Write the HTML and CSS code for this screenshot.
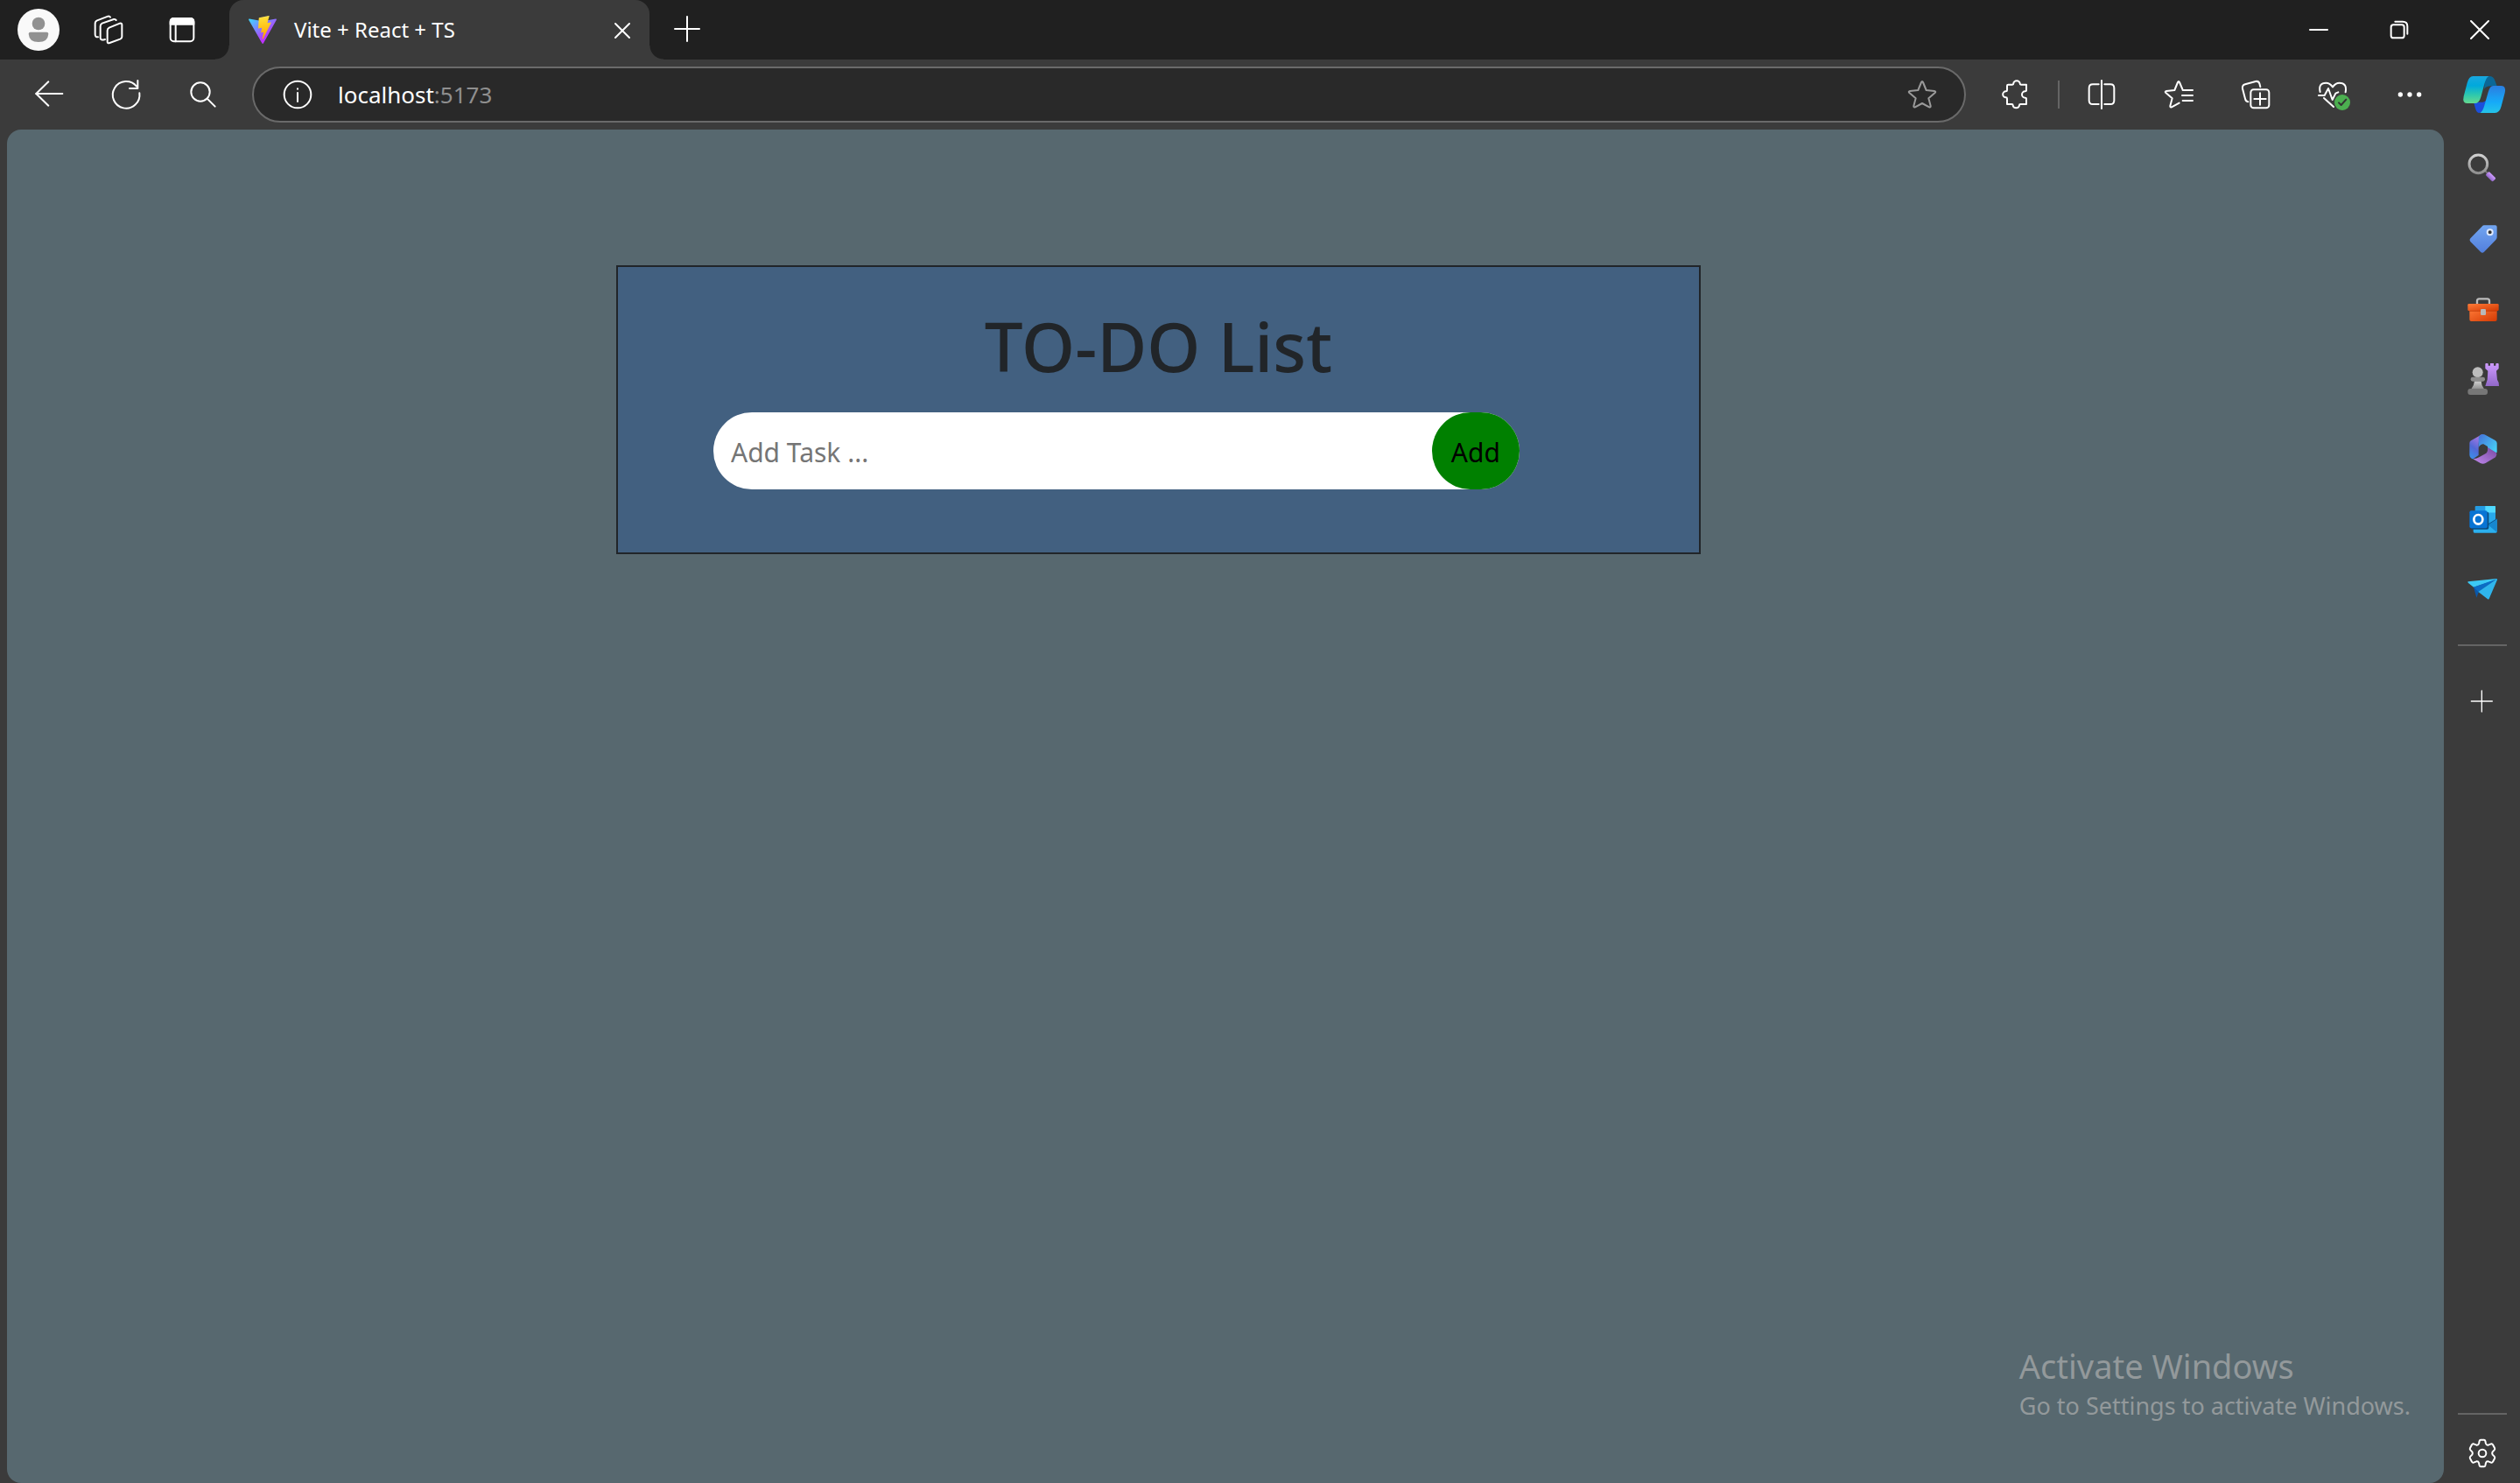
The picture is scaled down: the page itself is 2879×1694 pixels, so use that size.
FILE: index.html
```html
<!DOCTYPE html>
<html lang="en">
<head>
<meta charset="utf-8">
<title>Vite + React + TS</title>
<link rel="stylesheet" href="styles.css">
</head>
<body>
<header class="titlebar">
  <button class="profile" aria-label="Profile">
    <svg class="avatar" viewBox="0 0 144 144"><circle cx="72" cy="72" r="72" fill="#f9f9f9"/><circle cx="72" cy="51" r="22" fill="#919191"/><path d="M44 80H100Q106 80 106 86Q104 114 72 114Q40 114 38 86Q38 80 44 80Z" fill="#919191"/></svg>
  </button>
  <button class="workspaces" aria-label="Workspaces">
    <svg class="icon" viewBox="0 0 96 96"><path d="M44 51Q44 44 50 41L87 26Q94 24 94 31V72Q94 77 88 80L52 93Q44 96 44 89Z M36 81Q20 86 20 76V36Q20 29 26 26L66 12Q72 11 74 15 M12 73Q2 74 2 64V27Q2 19 9 16L46 2Q52 1 54 5"/></svg>
  </button>
  <button class="vertical-tabs" aria-label="Tab actions">
    <svg class="icon" viewBox="0 0 96 96"><rect x="8" y="9" width="80" height="79" rx="12"/><path d="M8 29V20Q8 9 20 9H76Q88 9 88 20V29Z" fill="#fff"/><path d="M26 29V88"/></svg>
  </button>
  <div class="tab">
    <svg class="favicon" viewBox="0 0 256 257"><defs><linearGradient id="v1" x1="-1%" x2="58%" y1="8%" y2="78%"><stop offset="0" stop-color="#41d1ff"/><stop offset="1" stop-color="#bd34fe"/></linearGradient><linearGradient id="v2" x1="43%" x2="50%" y1="2%" y2="89%"><stop offset="0" stop-color="#ffea83"/><stop offset=".08" stop-color="#ffdd35"/><stop offset="1" stop-color="#ffa800"/></linearGradient></defs><path fill="url(#v1)" d="M255.153 37.938L134.897 252.976c-2.483 4.44-8.862 4.466-11.382.048L.875 37.958c-2.746-4.814 1.371-10.646 6.827-9.67l120.385 21.517a6.537 6.537 0 0 0 2.322-.004l117.867-21.483c5.438-.991 9.574 4.796 6.877 9.62Z"/><path fill="url(#v2)" d="M185.432.063L96.44 17.501a3.268 3.268 0 0 0-2.634 3.014l-5.474 92.456a3.268 3.268 0 0 0 3.997 3.378l24.777-5.718c2.318-.535 4.413 1.507 3.936 3.838l-7.361 36.047c-.495 2.426 1.782 4.5 4.151 3.78l15.304-4.649c2.372-.72 4.652 1.36 4.15 3.788l-11.698 56.621c-.732 3.542 3.979 5.473 5.943 2.437l1.313-2.028l72.516-144.72c1.215-2.423-.88-5.186-3.54-4.672l-25.505 4.922c-2.396.462-4.435-1.77-3.759-4.114l16.646-57.705c.677-2.35-1.37-4.583-3.769-4.113Z"/></svg>
    <span class="tab-title">Vite + React + TS</span>
    <button class="tab-close" aria-label="Close tab"><svg class="icon" viewBox="0 0 96 96"><path d="M24 27L72 75M72 27L24 75"/></svg></button>
  </div>
  <button class="new-tab" aria-label="New tab"><svg class="icon" viewBox="0 0 96 96"><path d="M6 45H90M48 3V87"/></svg></button>
  <div class="window-controls">
    <button aria-label="Minimize"><svg class="icon" viewBox="0 0 96 96"><path d="M18 48H78"/></svg></button>
    <button aria-label="Restore"><svg class="icon" viewBox="0 0 96 96"><rect x="20" y="31" width="45" height="45" rx="8"/><path d="M34 20H60Q76 20 76 36V62"/></svg></button>
    <button aria-label="Close"><svg class="icon" viewBox="0 0 96 96"><path d="M18 18L78 78M78 18L18 78"/></svg></button>
  </div>
</header>

<nav class="toolbar">
  <button class="tool" aria-label="Back"><svg class="icon" viewBox="0 0 96 96"><path d="M94 45H3M46 4L4 45L46 86"/></svg></button>
  <button class="tool" aria-label="Refresh"><svg class="icon" viewBox="0 0 96 96"><path d="M94 43A46 46 0 1 1 84 20M88 0V27H60"/></svg></button>
  <button class="tool" aria-label="Search"><svg class="icon" viewBox="0 0 96 96"><circle cx="39" cy="39" r="32"/><path d="M62 62L89 89"/></svg></button>
  <div class="address">
    <svg class="icon" viewBox="0 0 96 96"><circle cx="48" cy="48" r="46"/><path d="M48 42V72M48 28V29"/></svg>
    <span class="url">localhost<span class="port">:5173</span></span>
    <button class="bookmark" aria-label="Add to favorites"><svg class="icon dim" viewBox="0 0 96 96"><path d="M45 6Q48 0 51 6L62 33L90 36Q97 38 91 43L70 61L77 87Q78 93 72 91L48 78L24 91Q18 93 19 87L26 61L5 43Q-1 38 6 36L34 33Z"/></svg></button>
  </div>
  <button class="tool" aria-label="Extensions"><svg class="icon" viewBox="0 0 96 96"><path d="M22 14H36Q40 14 40 10A11 9 0 0 1 62 10Q62 14 66 14H84V34Q84 37 80 37A11 11 0 0 0 80 59Q84 59 84 62V81H64Q60 81 60 85A11 9 0 0 1 38 85Q38 81 34 81H18V62Q18 58 14 58A10 10 0 0 1 14 37Q18 37 18 33V18Q18 14 22 14Z"/></svg></button>
  <span class="tool-divider"></span>
  <button class="tool" aria-label="Split screen"><svg class="icon" viewBox="0 0 96 96"><path d="M38 13H18Q5 13 5 26V68Q5 81 18 81H38M58 13H78Q91 13 91 26V68Q91 81 78 81H58M48 0V96"/></svg></button>
  <button class="tool" aria-label="Favorites"><svg class="icon" viewBox="0 0 96 96"><path d="M62 32L51 6Q48 0 45 6L34 33L6 36Q-1 38 5 43L26 61L19 87Q18 93 24 91L50 77M62 33H96M60 51H96M62 69H96"/></svg></button>
  <button class="tool" aria-label="Collections"><svg class="icon" viewBox="0 0 96 96"><rect x="31" y="31" width="63" height="63" rx="10"/><path d="M63 43V83M43 63H83M22 73Q14 71 12 62L3 28Q1 16 12 13L48 3Q58 1 61 10L64 22"/></svg></button>
  <button class="tool" aria-label="Browser essentials"><svg class="icon" viewBox="0 0 96 96"><path d="M5 39Q-2 8 25 8Q38 8 48 22Q58 8 71 8Q98 8 92 40M0 51H20L33 27L47 66L58 44L67 40M18 60L51 90"/><circle cx="81" cy="75" r="27" fill="#4caf50" stroke="none"/><path d="M69 76L77 84L94 65" stroke="#333"/></svg></button>
  <button class="tool" aria-label="Settings and more"><svg class="icon" viewBox="0 0 96 96"><g fill="#fff" stroke="none"><circle cx="16" cy="48" r="8"/><circle cx="48" cy="48" r="8"/><circle cx="80" cy="48" r="8"/></g></svg></button>
  <button class="copilot" aria-label="Copilot">
    <svg class="copilot-icon" viewBox="0 0 144 144"><defs><linearGradient id="c1" x1="0" y1="0" x2="0" y2="1"><stop offset="0" stop-color="#19a7df"/><stop offset=".35" stop-color="#00a9dc"/><stop offset=".7" stop-color="#2fc9ac"/><stop offset="1" stop-color="#66d990"/></linearGradient><linearGradient id="c2" x1="0" y1="0" x2="0" y2="1"><stop offset="0" stop-color="#2b7de0"/><stop offset=".6" stop-color="#16aaf8"/><stop offset="1" stop-color="#25c4e8"/></linearGradient></defs><path d="M76 9H90Q104 9 109 24L116 43H94Q78 43 72 54Z" fill="#0b6796"/><path d="M36 98H68Q76 98 80 88L74 112Q68 135 56 135Q46 135 42 119Z" fill="#1b4fdc"/><path d="M34 9H88Q78 13 72 40L61 80Q55 102 40 102H13Q-3 102 2 78L14 32Q20 9 34 9Z" fill="url(#c1)"/><path d="M103 42H131Q148 42 143 66L131 112Q125 135 109 135H58Q68 130 74 106L86 64Q92 42 103 42Z" fill="url(#c2)"/></svg>
  </button>
</nav>

<div class="workarea">
  <main class="page">
    <section class="todo">
      <h1 class="todo-title">TO-DO List</h1>
      <form class="todo-form">
        <input class="todo-input" type="text" placeholder="Add Task ..." aria-label="Add Task">
        <button class="todo-add" type="button">Add</button>
      </form>
    </section>
    <aside class="watermark">
      <p class="watermark-title">Activate Windows</p>
      <p class="watermark-text">Go to Settings to activate Windows.</p>
    </aside>
  </main>
  <aside class="sidebar">
    <button aria-label="Search"><svg class="app" viewBox="0 0 120 120"><defs><linearGradient id="g" x1="0" y1="0" x2="0" y2="1"><stop offset="0" stop-color="#d0d0d0"/><stop offset="1" stop-color="#8f8f8f"/></linearGradient><linearGradient id="p" x1="0" y1="0" x2="0" y2="1"><stop offset="0" stop-color="#cf9bff"/><stop offset="1" stop-color="#9168c8"/></linearGradient></defs><path d="M68 68L78 78" stroke="#777" stroke-width="6"/><circle cx="46" cy="46" r="31" fill="none" stroke="url(#g)" stroke-width="9"/><rect x="-17" y="-8" width="34" height="17" rx="4" transform="translate(89 89) rotate(45)" fill="url(#p)"/></svg></button>
    <button aria-label="Shopping"><svg class="app" viewBox="0 0 120 120"><defs><linearGradient id="t" x1="0" y1="0" x2="0" y2="1"><stop offset="0" stop-color="#72a5f0"/><stop offset="1" stop-color="#527fdc"/></linearGradient></defs><path d="M66 16H104Q110 16 110 22V58Q110 62 106 66L66 107Q60 113 54 107L19 72Q14 66 19 61L60 19Q62 16 66 16Z" fill="url(#t)"/><circle cx="86" cy="40" r="9" fill="#333" stroke="#dfeaff" stroke-width="6"/></svg></button>
    <button aria-label="Tools"><svg class="app" viewBox="0 0 120 120"><defs><linearGradient id="o" x1="0" y1="0" x2="1" y2="1"><stop offset="0" stop-color="#ff7b38"/><stop offset="1" stop-color="#d33a04"/></linearGradient></defs><path d="M42 46V35Q42 28 49 28H77Q84 28 84 35V46" fill="none" stroke="#bcbcbc" stroke-width="7"/><rect x="16" y="60" width="94" height="45" rx="6" fill="url(#o)"/><rect x="10" y="45" width="106" height="24" rx="4" fill="url(#o)"/><path d="M16 70H110" stroke="#b83505" stroke-width="2"/><rect x="54" y="63" width="18" height="21" rx="4" fill="#b9b9b9"/></svg></button>
    <button aria-label="Games"><svg class="app" viewBox="0 0 120 120"><path d="M70 12Q70 9 73 9H77Q80 9 80 12V17H87V9H99V17H106V12Q106 9 109 9H113Q116 9 116 12V27L108 35L111 65Q117 72 117 87H70L77 65L79 35L70 27Z" fill="url(#p)"/><path d="M33 70H56Q56 84 66 97H22Q32 84 33 70Z" fill="url(#g)"/><circle cx="44" cy="40" r="18" fill="#bdbdbd"/><rect x="20" y="56" width="49" height="15" rx="7" fill="#8e8e8e"/><rect x="10" y="96" width="68" height="21" rx="9" fill="#777"/></svg></button>
    <button aria-label="Microsoft 365"><svg class="app" viewBox="0 0 120 120"><defs><linearGradient id="m1" x1=".7" y1="0" x2=".3" y2="1"><stop offset="0" stop-color="#b57be4"/><stop offset=".6" stop-color="#5268d6"/><stop offset="1" stop-color="#3d8be8"/></linearGradient><linearGradient id="m2" x1="0" y1="0" x2="1" y2=".8"><stop offset="0" stop-color="#4571d8"/><stop offset="1" stop-color="#47d0f6"/></linearGradient><linearGradient id="m3" x1="0" y1="1" x2="1" y2="0"><stop offset="0" stop-color="#c18aee"/><stop offset="1" stop-color="#77479f"/></linearGradient></defs><path d="M62 13Q54 13 49 18L21 34Q16 37 16 43V83Q16 92 24 96L28 97L47 84V48Q47 18 62 13Z" fill="url(#m1)"/><path d="M47 58V24Q50 12 62 12Q67 12 70 14L104 33Q110 37 110 43V72Q110 78 105 75L78 59V54L64 46Q54 44 47 58Z" fill="url(#m2)"/><path d="M78 57L107 75Q112 80 105 91L71 111Q62 116 53 111L28 97Q42 96 50 90L73 77Q79 74 78 57Z" fill="url(#m3)"/></svg></button>
    <button aria-label="Outlook"><svg class="app" viewBox="0 0 120 120"><rect x="35" y="18" width="70" height="62" rx="3" fill="#249be2"/><path d="M70 18H102Q105 18 105 21V41H70Z" fill="#50d9ff"/><path d="M70 41H105V66L88 78L70 68Z" fill="#28a8ea"/><path d="M29 78L70 84L110 62V106Q110 110 106 110H33Q29 110 29 106Z" fill="#2bb0ef"/><path d="M110 62L78 82L110 108Z" fill="#1687cf"/><path d="M78 82L110 62" stroke="#0a528c" stroke-width="3"/><rect x="20" y="38" width="62" height="60" rx="6" fill="#0b4b7d"/><rect x="16" y="34" width="61" height="60" rx="6" fill="#0874d4"/><ellipse cx="46" cy="64" rx="15" ry="16" fill="none" stroke="#fff" stroke-width="8"/></svg></button>
    <button aria-label="Drop"><svg class="app" viewBox="0 0 120 120"><path d="M30 56L110 28L48 72L40 92Z" fill="#0b57a8"/><path d="M11 37L109 27Q111 28 108 31L30 56L12 42Q8 39 11 37Z" fill="#3cc9f5"/><path d="M30 56L110 28L46 72Z" fill="#0c6cc4"/><path d="M110 28Q112 28 111 31L83 96Q80 99 77 96L46 72Z" fill="#2fb5ec"/></svg></button>
    <hr class="side-divider">
    <button aria-label="Customize"><svg class="icon" viewBox="0 0 96 96"><path d="M10 48H82M46 12V84" stroke-width="4"/></svg></button>
    <hr class="side-divider side-divider-bottom">
    <button class="settings" aria-label="Settings"><svg class="gear icon" viewBox="-51 -51 102 102"><path d="M-6 -46H6Q9 -46 10 -42L12 -33Q14 -27 20 -28L30 -32Q34 -33 36 -29L42 -18Q44 -14 41 -11L35 -5Q32 0 35 5L41 11Q44 14 42 18L36 29Q34 33 30 32L20 28Q14 27 12 33L10 42Q9 46 6 46H-6Q-9 46 -10 42L-12 33Q-14 27 -20 28L-30 32Q-34 33 -36 29L-42 18Q-44 14 -41 11L-35 5Q-32 0 -35 -5L-41 -11Q-44 -14 -42 -18L-36 -29Q-34 -33 -30 -32L-20 -28Q-14 -27 -12 -33L-10 -42Q-9 -46 -6 -46Z"/><circle r="13"/></svg></button>
  </aside>
</div>
</body>
</html>
```
FILE: styles.css
```css
* {
  box-sizing: border-box;
}

body {
  margin: 0;
  min-height: 100vh;
  display: flex;
  flex-direction: column;
  background: #3b3b3b;
  color: #fff;
  font-family: "Noto Sans", sans-serif;
}

button {
  display: flex;
  align-items: center;
  justify-content: center;
  padding: 0;
  border: 0;
  background: none;
  color: inherit;
  font: inherit;
}

svg {
  display: block;
  flex: none;
  overflow: visible;
}

.icon {
  width: 32px;
  height: 32px;
  fill: none;
  stroke: #fff;
  stroke-width: 6;
  stroke-linecap: round;
  stroke-linejoin: round;
}

.dim {
  stroke: #9a9a9a;
}

/* Title bar */
.titlebar {
  display: flex;
  height: 68px;
  background: #202020;
}

.profile {
  width: 88px;
}

.avatar {
  width: 48px;
  height: 48px;
}

.workspaces {
  width: 72px;
}

.vertical-tabs {
  width: 96px;
}

.tab {
  position: relative;
  display: flex;
  align-items: center;
  gap: 20px;
  width: 480px;
  margin-left: 6px;
  padding: 0 11px 0 22px;
  border-radius: 16px 16px 0 0;
  background: #3b3b3b;
}

.tab::before,
.tab::after {
  content: "";
  position: absolute;
  bottom: 0;
  width: 16px;
  height: 16px;
}

.tab::before {
  right: 100%;
  background: radial-gradient(circle at 0 0, #202020 15px, #3b3b3b 16px);
}

.tab::after {
  left: 100%;
  background: radial-gradient(circle at 100% 0, #202020 15px, #3b3b3b 16px);
}

.favicon {
  width: 32px;
  height: 32px;
}

.tab-title {
  flex: 1;
  font-size: 24px;
  line-height: 32px;
}

.tab-close {
  width: 40px;
  height: 40px;
}

.new-tab {
  width: 86px;
}

.window-controls {
  display: flex;
  margin-left: auto;
}

.window-controls button {
  width: 92px;
}

/* Toolbar */
.toolbar {
  display: flex;
  align-items: center;
  height: 80px;
  padding-left: 12px;
}

.tool {
  width: 88px;
  height: 64px;
}

.address {
  flex: 1;
  display: flex;
  align-items: center;
  gap: 30px;
  height: 64px;
  margin: 0 13px 0 12px;
  padding: 0 14px 0 34px;
  border: 2px solid #6a6a6a;
  border-radius: 32px;
  background: #292929;
}

.url {
  flex: 1;
  font-size: 26px;
  line-height: 40px;
}

.port {
  color: #8f8f8f;
}

.bookmark {
  width: 68px;
  height: 60px;
}

.tool-divider {
  width: 2px;
  height: 32px;
  margin: 0 4px;
  background: #646464;
}

.copilot {
  width: 82px;
  height: 64px;
}

.copilot-icon {
  width: 48px;
  height: 48px;
}

/* Page and side panel */
.workarea {
  flex: 1;
  display: flex;
}

.page {
  flex: 1;
  display: flex;
  flex-direction: column;
  justify-content: space-between;
  margin-left: 8px;
  border-radius: 16px;
  background: #57686f;
}

.todo {
  width: 44.5%;
  height: 330px;
  margin: 155px 0 0 25%;
  padding-top: 42px;
  border: 2px solid #212529;
  background: #426080;
}

.todo-title {
  margin: 0 0 28px;
  color: #212529;
  font-size: 78px;
  font-weight: 500;
  line-height: 96px;
  text-align: center;
}

.todo-form {
  display: flex;
  height: 88px;
  margin: 0 205px 0 109px;
  border-radius: 44px;
  background: #fff;
}

.todo-input {
  flex: 1;
  min-width: 0;
  padding: 2px 20px 0;
  border: 0;
  border-radius: 44px;
  background: none;
  color: #212529;
  font: inherit;
  font-size: 30px;
}

.todo-input::placeholder {
  color: #757575;
  opacity: 1;
}

.todo-add {
  width: 100px;
  padding-top: 2px;
  border-radius: 44px;
  background: #008000;
  color: #000;
  font-size: 30px;
}

.watermark {
  align-self: flex-end;
  padding: 0 38px 68px 0;
  color: #93999b;
}

.watermark p {
  margin: 0;
}

.watermark-title {
  font-size: 38px;
  line-height: 52px;
}

.watermark-text {
  font-size: 27px;
  line-height: 40px;
}

.sidebar {
  display: flex;
  flex-direction: column;
  width: 87px;
  padding-top: 4px;
}

.sidebar button {
  width: 100%;
  height: 80px;
}

.app {
  width: 40px;
  height: 40px;
}

.side-divider {
  width: 56px;
  height: 2px;
  margin: 24px auto 23px;
  border: 0;
  background: #646464;
}

.side-divider-bottom {
  margin: auto auto 10px;
}

.sidebar .settings {
  height: 68px;
}

.gear {
  width: 34px;
  height: 34px;
}
```
